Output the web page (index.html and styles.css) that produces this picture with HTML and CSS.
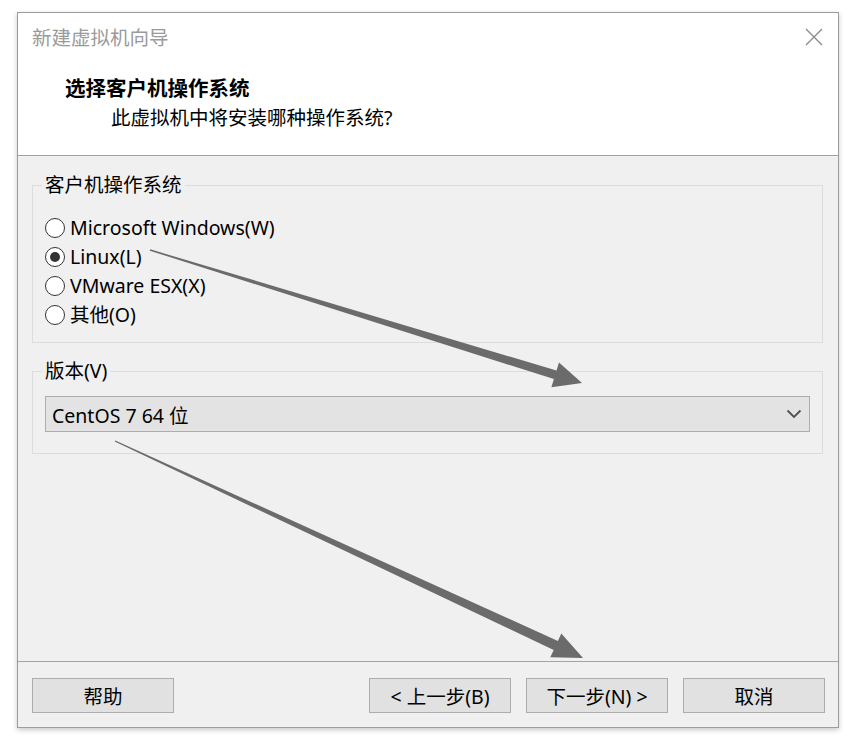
FILE: index.html
```html
<!DOCTYPE html>
<html lang="zh-CN">
<head>
<meta charset="utf-8">
<title>新建虚拟机向导</title>
<link rel="stylesheet" href="styles.css">
</head>
<body>
<div class="dialog">
  <div class="header">
    <div class="titlebar">
      <span class="title">新建虚拟机向导</span>
      <svg class="close" width="18" height="18" viewBox="0 0 18 18"><path d="M1 1 L17 17 M17 1 L1 17" stroke="#8a8a8a" stroke-width="1.3" fill="none"/></svg>
    </div>
    <div class="heading">选择客户机操作系统</div>
    <div class="subtitle">此虚拟机中将安装哪种操作系统?</div>
  </div>
  <div class="content">
    <fieldset class="group group-os">
      <legend>客户机操作系统</legend>
      <div class="radio-row"><span class="radio"></span><span class="label">Microsoft Windows(W)</span></div>
      <div class="radio-row"><span class="radio checked"></span><span class="label">Linux(L)</span></div>
      <div class="radio-row"><span class="radio"></span><span class="label">VMware ESX(X)</span></div>
      <div class="radio-row"><span class="radio"></span><span class="label">其他(O)</span></div>
    </fieldset>
    <fieldset class="group group-ver">
      <legend>版本(V)</legend>
      <div class="select">
        <span class="select-text">CentOS 7 64 位</span>
        <svg class="chevron" width="16" height="10" viewBox="0 0 16 10"><path d="M1.5 1.5 L8 8 L14.5 1.5" stroke="#505050" stroke-width="1.8" fill="none"/></svg>
      </div>
    </fieldset>
  </div>
  <div class="footer">
    <div class="btn">帮助</div>
    <div class="spacer"></div>
    <div class="btn">&lt; 上一步(B)</div>
    <div class="btn">下一步(N) &gt;</div>
    <div class="btn">取消</div>
  </div>
</div>
<svg class="arrows" width="859" height="748" viewBox="0 0 859 748">
  <polygon fill="#6b6b6b" points="150.2,249.3 556.5,370.5 559.0,362.4 582,383 551.4,387.2 553.9,379.1 149.8,250.7"/>
  <polygon fill="#6b6b6b" points="115.3,440.4 557.9,640.9 561.3,633.6 583,658 550.3,657.2 553.7,649.9 114.7,441.6"/>
</svg>
</body>
</html>
```
FILE: styles.css
```css
html, body {
  margin: 0;
  padding: 0;
  background: #ffffff;
}
body {
  width: 859px;
  height: 748px;
  position: relative;
  overflow: hidden;
  font-family: "Noto Sans", "Noto Sans CJK SC", sans-serif;
  font-size: 19.5px;
  color: #000;
}
.dialog {
  box-sizing: border-box;
  margin: 12px 0 0 17px;
  width: 822px;
  height: 716px;
  border: 1px solid #9c9c9c;
  box-shadow: 0 2px 5px rgba(0,0,0,0.22);
  display: flex;
  flex-direction: column;
  background: #f0f0f0;
}
.header {
  background: #ffffff;
  border-bottom: 1px solid #a3a3a3;
  height: 143px;
  box-sizing: border-box;
}
.titlebar {
  height: 50px;
  display: flex;
  align-items: center;
  justify-content: space-between;
  padding: 0 15px 0 14px;
}
.title {
  color: #9a9a9a;
  line-height: 26px;
}
.close {
  display: block;
  margin-top: -3px;
}
.heading {
  font-weight: bold;
  font-size: 20.5px;
  line-height: 26px;
  margin-top: 12px;
  padding-left: 47px;
}
.subtitle {
  line-height: 26px;
  margin-top: 4px;
  padding-left: 93px;
}
.content {
  flex: 1;
  padding: 17px 15px 0 14px;
}
.group {
  margin: 0;
  border: 1px solid #dcdcdc;
  padding: 0 12px;
}
.group legend {
  line-height: 24px;
  padding: 0 3px;
  margin-left: -3px;
}
.group-os {
  padding-top: 16px;
  padding-bottom: 13px;
}
.group-ver {
  margin-top: 16px;
  padding-top: 13px;
  padding-bottom: 21px;
}
.radio-row {
  display: flex;
  align-items: center;
  height: 29px;
}
.radio {
  box-sizing: border-box;
  width: 20px;
  height: 20px;
  border: 1.6px solid #333333;
  border-radius: 50%;
  background: #ffffff;
  display: flex;
  align-items: center;
  justify-content: center;
  margin-right: 5px;
}
.radio.checked::after {
  content: "";
  width: 10px;
  height: 10px;
  border-radius: 50%;
  background: #333333;
}
.label {
  line-height: 26px;
}
.select {
  box-sizing: border-box;
  height: 36px;
  border: 1px solid #adadad;
  background: #e3e3e3;
  display: flex;
  align-items: center;
  justify-content: space-between;
  padding: 0 7px 0 6px;
}
.chevron {
  display: block;
}
.footer {
  height: 66px;
  box-sizing: border-box;
  border-top: 1px solid #a3a3a3;
  display: flex;
  align-items: flex-start;
  gap: 15px;
  padding: 16px 13px 0 14px;
}
.spacer {
  flex: 1;
}
.btn {
  box-sizing: border-box;
  width: 142px;
  height: 35px;
  border: 1px solid #adadad;
  background: #e1e1e1;
  display: flex;
  align-items: center;
  justify-content: center;
}
.arrows {
  position: absolute;
  left: 0;
  top: 0;
  pointer-events: none;
}
```
